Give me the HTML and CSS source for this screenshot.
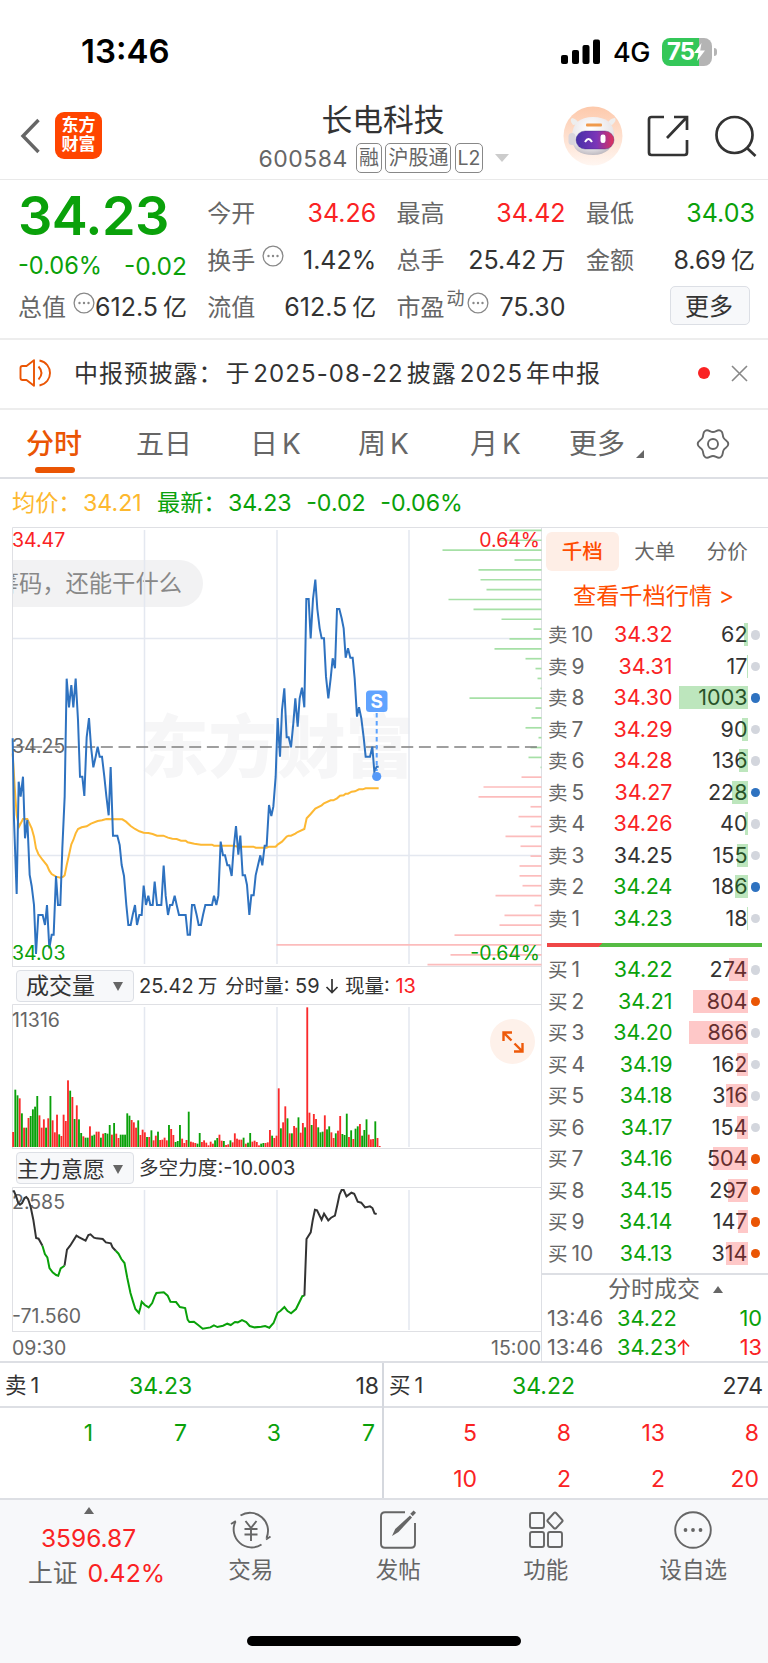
FILE: index.html
```html
<!DOCTYPE html>
<html lang="zh-CN">
<head>
  <meta charset="UTF-8">
  <meta name="viewport" content="width=device-width, initial-scale=1.0">
  <title>长电科技 600584</title>
  <link rel="stylesheet" href="styles.css">
</head>
<body>
  <div class="status-bar">
    <span class="clock">13:46</span>
    <div class="status-right">
      <svg class="signal" width="40" height="26" viewBox="0 0 40 26">
        <rect x="0" y="16" width="7" height="9" rx="2"/>
        <rect x="11" y="11" width="7" height="14" rx="2"/>
        <rect x="21.500" y="6" width="7" height="19" rx="2"/>
        <rect x="32" y="0.500" width="7" height="24.500" rx="2"/>
      </svg>
      <span class="network">4G</span>
      <div class="battery">
        <span>75</span>
        <svg width="11" height="18" viewBox="0 0 11 18"><path d="M7.500 0 0 10h4.500L3 18l8-10.500H6.200z" fill="#fff"/></svg>
      </div>
    </div>
  </div>

  <header class="header">
    <div class="header-left">
      <svg width="22" height="36" viewBox="0 0 22 36"><path d="M18.500 2 3 18l15.500 16" fill="none" stroke="#666" stroke-width="3.400"/></svg>
      <div class="logo"><span>东方</span><span>财富</span></div>
    </div>
    <div class="title">
      <h1>长电科技</h1>
      <div class="code">
        <span class="code-num">600584</span>
        <span class="tag">融</span><span class="tag">沪股通</span><span class="tag l2">L2</span>
        <i class="tri-down light"></i>
      </div>
    </div>
    <div class="header-right">
      <svg width="60" height="60" viewBox="0 0 60 60">
        <defs>
          <linearGradient id="halo" x1="0" y1="0" x2="0" y2="1"><stop offset="0" stop-color="#fdc9ab"/><stop offset="1" stop-color="#fff6f1"/></linearGradient>
          <linearGradient id="visor" x1="0" y1="0" x2="1" y2="0"><stop offset="0" stop-color="#4630a8"/><stop offset=".55" stop-color="#7c35b8"/><stop offset="1" stop-color="#e0305a"/></linearGradient>
          <radialGradient id="helmet" cx=".45" cy=".3" r=".75"><stop offset="0" stop-color="#fff"/><stop offset=".7" stop-color="#e8e5e8"/><stop offset="1" stop-color="#b5b0b8"/></radialGradient>
        </defs>
        <circle cx="30" cy="30" r="29.500" fill="url(#halo)"/>
        <path d="M10 19q-4-5-1-7 5 1 7 6zM49 19q5-4 3-7-5 0-8 6z" fill="#eee"/>
        <path d="M9 31C9 17 17 11 30 11s21 6 21 18c0 13-8 20-21 20S9 44 9 31z" fill="url(#helmet)"/>
        <rect x="5.500" y="27" width="7" height="12" rx="3.500" fill="#d9d6dc"/>
        <rect x="23" y="17.500" width="16" height="3" rx="1" fill="#f09a4c"/>
        <rect x="13" y="25" width="38" height="18" rx="9" fill="url(#visor)" stroke="#3a2a80" stroke-opacity=".35"/>
        <path d="M22 36q3.500-6 7 0" fill="none" stroke="#fff" stroke-width="2"/>
        <rect x="37.500" y="28.500" width="5" height="8.500" rx="2.300" fill="#fff"/>
      </svg>
      <svg class="share" width="42" height="42" viewBox="0 0 42 42" fill="none" stroke="#333" stroke-width="2.700">
        <path d="M17 2H4.500Q2 2 2 4.500v33Q2 40 4.500 40h33q2.500 0 2.500-2.500V25"/>
        <path d="M27 2h13v13M40 2 20 23"/>
      </svg>
      <svg class="search" width="42" height="44" viewBox="0 0 42 44" fill="none" stroke="#333" stroke-width="2.700">
        <circle cx="19.500" cy="21" r="18"/><path d="m32 34 8.500 8"/>
      </svg>
    </div>
  </header>

  <section class="quote">
    <div class="quote-price">
      <div class="big">34.23</div>
      <div class="chg"><span>-0.06%</span><span>-0.02</span></div>
    </div>
    <div class="pair"><label>今开</label><b class="up">34.26</b></div>
    <div class="pair"><label>最高</label><b class="up">34.42</b></div>
    <div class="pair"><label>最低</label><b class="down">34.03</b></div>
    <div class="pair"><label>换手<svg class="dots"><use href="#more-dots"/></svg></label><b>1.42%</b></div>
    <div class="pair"><label>总手</label><b>25.42<em>万</em></b></div>
    <div class="pair"><label>金额</label><b>8.69<em>亿</em></b></div>
    <div class="pair"><label>总值<svg class="dots"><use href="#more-dots"/></svg></label><b>612.5<em>亿</em></b></div>
    <div class="pair"><label>流值</label><b>612.5<em>亿</em></b></div>
    <div class="pair"><label>市盈<sup>动</sup><svg class="dots tight"><use href="#more-dots"/></svg></label><b>75.30</b></div>
    <button class="more">更多</button>
  </section>

  <section class="notice">
    <svg width="34" height="30" viewBox="0 0 34 30" fill="none" stroke="#ea5504" stroke-width="1.900">
      <path d="M15 2.200v25.600L7.500 22H3.500Q1.500 22 1.500 20V10q0-2 2-2h4z" stroke-linejoin="round"/>
      <path d="M19.500 8.500q6 6.500 0 13M20.500 2.500c14 3 14 22 0 25"/>
    </svg>
    <p>中报预披露：<span class="yu">于</span><span class="num">2025-08-22</span>披露<span class="num">2025</span>年中报</p>
    <i class="red-dot"></i>
    <svg width="17" height="17" viewBox="0 0 17 17" stroke="#888" stroke-width="1.600"><path d="m1 1 15 15M16 1 1 16"/></svg>
  </section>

  <nav class="tabs">
    <a class="active">分时</a>
    <a>五日</a>
    <a>日<span>K</span></a>
    <a>周<span>K</span></a>
    <a>月<span>K</span></a>
    <a class="tab-more">更多</a>
    <svg width="34" height="34" viewBox="0 0 34 34" fill="none" stroke="#666" stroke-width="1.900">
      <path d="M17 5C20 5 21.700 2 24.700 3.800C27.700 5.600 26.100 8.300 27.600 10.900C29.100 13.500 32.300 13.500 32.300 17C32.300 20.500 29.100 20.500 27.600 23.100C26.100 25.700 27.700 28.400 24.700 30.200C21.700 32 20 29 17 29C14 29 12.300 32 9.300 30.200C6.300 28.400 7.900 25.700 6.400 23.100C4.900 20.500 1.700 20.500 1.700 17C1.700 13.500 4.900 13.500 6.400 10.900C7.900 8.300 6.300 5.600 9.300 3.800C12.300 2 14 5 17 5z"/>
      <circle cx="17" cy="17" r="5"/>
    </svg>
  </nav>

  <div class="legend">
    <span class="avg">均价：</span><span class="avg v1">34.21</span>
    <span class="last">最新：</span><span>34.23</span><span>-0.02</span><span>-0.06%</span>
  </div>

  <main class="main">
    <div class="charts">
      <div class="chart price-chart">
        <div class="pill">筹码，还能干什么</div>
        <div class="watermark">东方财富</div>
        <svg width="542" height="440" viewBox="0 0 542 440">
          <g class="grid">
            <path d="M144.500 3v434M277 3v434M409 3v434" />
            <path d="M12 111.500h530M12 328.500h530"/>
          </g>
          <path class="frame" d="M12.500 440V.500H542M12 439.500h530"/>
          <g id="profile"></g>
          <path d="M12.500 220H538" stroke="#808080" stroke-width="1.600" stroke-dasharray="12 5.670"/>
          <g transform="translate(0 -7) scale(.33333)" fill="none" stroke-linejoin="miter">
            <polyline class="avg-line" points="38,700 44,800 50,885 57,920 69,897 82,897 95,925 102,950 108,985 115,1002 128,1020 141,1036 148,1052 155,1062 168,1070 181,1073 190,1070 194,1066 200,1036 207,1005 214,973 220,960 227,940 234,927 245,922 260,919 273,911 293,903 306,901 319,897 367,898 378,905 392,918 405,927 418,934 431,938 445,939 458,942 471,947 490,947 504,953 517,956 530,957 543,962 557,962 563,967 583,971 603,974 636,974 642,977 700,977 715,980 760,980 767,983 800,983 807,980 827,980 834,973 846,965 860,950 866,947 873,947 886,941 893,936 913,927 920,895 932,882 946,866 965,856 972,850 992,841 1000,841 1011,835 1020,827 1031,826 1037,821 1044,821 1055,815 1065,814 1077,808 1088,808 1097,805 1136,805"/>
            <polyline class="price-line" points="38,655 42,900 50,1122 56,785 62,830 69,770 75,955 82,900 89,1065 95,1098 102,1155 108,1302 115,1185 128,1185 135,1215 141,1155 148,1285 155,1244 161,1244 168,1068 174,1155 181,1155 187,985 194,830 200,476 207,562 214,495 220,562 227,476 234,600 240,770 247,770 253,828 260,652 267,594 273,680 280,742 287,710 293,680 299,710 306,710 313,770 319,828 326,886 332,741 339,947 352,947 359,975 365,1035 372,1068 379,1155 385,1215 392,1215 398,1185 405,1155 411,1215 418,1185 425,1185 431,1097 438,1155 445,1127 451,1155 458,1155 464,1085 471,1155 484,1155 491,1037 497,1127 504,1185 510,1155 517,1155 524,1127 530,1155 537,1185 557,1185 563,1244 570,1244 576,1155 583,1155 590,1185 596,1215 603,1215 609,1185 616,1155 636,1155 642,1127 649,1155 655,1127 662,965 669,1006 675,1006 682,1036 688,1036 695,1068 701,985 708,918 715,1004 721,947 728,1066 735,1066 741,1095 748,1185 754,1126 761,1126 767,1066 774,1036 781,1006 787,1036 794,977 800,977 807,855 814,888 820,860 827,770 833,594 840,710 846,570 853,505 860,652 866,652 873,682 880,610 886,535 893,620 899,535 906,503 913,562 919,237 926,237 932,355 939,237 946,179 952,267 959,325 965,355 972,355 978,470 985,535 992,475 998,415 1005,445 1011,267 1018,267 1025,295 1031,325 1037,413 1044,385 1051,413 1058,413 1064,475 1071,590 1077,562 1084,595 1091,652 1097,710 1110,710 1117,680 1123,755 1130,740 1136,740"/>
          </g>
          <path d="M376.700 186v58" stroke="#5aa2ff" stroke-width="2" stroke-dasharray="4.500 3.500"/>
          <circle cx="376.700" cy="249.500" r="4.600" fill="#5599f8"/>
          <rect x="366" y="163.500" width="21.500" height="21.500" rx="3.500" fill="#60a3ff"/>
          <text x="376.700" y="181" class="sell-mark">S</text>
          <text x="12" y="20" class="axis up">34.47</text>
          <text x="12" y="226" class="axis">34.25</text>
          <text x="12" y="432.500" class="axis down">34.03</text>
          <text x="540" y="20" class="axis up end">0.64%</text>
          <text x="540" y="432.500" class="axis down end">-0.64%</text>
        </svg>
      </div>

      <div class="toolbar">
        <div class="select">成交量<i class="tri-down"></i></div>
        <p>25.42<em class="unit">万</em> <em>分时量</em>: 59 <svg width="14" height="16" viewBox="0 0 13 16" fill="none" stroke="#333" stroke-width="1.700"><path d="M6.500 1v13.500M1 9l5.500 5.500L12 9"/></svg> <em>现量</em>: <span class="up">13</span></p>
      </div>
      <div class="chart volume-chart">
        <svg width="542" height="145" viewBox="0 0 542 145">
          <path class="grid" d="M144.500 3v140M277 3v140M409 3v140"/>
          <path class="frame" d="M12.500 145V.500H542M12 144.500h530"/>
          <g id="volume"></g>
          <text x="12" y="22.500" class="axis">11316</text>
        </svg>
        <div class="expand">
          <svg width="24" height="24" viewBox="0 0 24 24" fill="none" stroke="#ee5a0a" stroke-width="2.400"><path d="M2.500 11V2.500H11M2.500 2.500l8 8M21.500 13v8.500H13M21.500 21.500l-8-8"/></svg>
        </div>
      </div>

      <div class="toolbar second">
        <div class="select wide">主力意愿<i class="tri-down"></i></div>
        <p><em>多空力度</em>:-10.003</p>
      </div>
      <div class="chart force-chart">
        <svg width="542" height="145" viewBox="0 0 542 145">
          <path class="grid" d="M144.500 3v140M277 3v140M409 3v140"/>
          <path class="frame" d="M12.500 145V.500H542M12 144.500h530"/>
          <text x="12" y="22" class="axis">2.585</text>
          <text x="12" y="136" class="axis">-71.560</text>
          <g class="force" transform="translate(0 -37.300) scale(.35070 .33333)">
            <polyline points="36,125 40,125 46,140 52,160 57,165 63,160 70,145 75,142 80,148 87,170 95,210 103,265 110,267 121,288"/>
            <polyline class="g" points="121,288 128,313 135,323 141,355 150,368 160,376 166,378 173,356 184,348"/>
            <polyline points="184,348 191,300 200,288 218,258 226,263 244,273 252,256 258,254 268,264 275,266 293,268 302,278 316,281 321,293 330,303"/>
            <polyline class="g" points="330,303 338,312 346,328 355,340 363,385 372,430 380,458 386,478 396,490 400,475 404,456 413,466 424,473 434,460 441,440 446,430 467,428 478,438 486,456 502,457 513,472 528,475 535,510 540,517 553,516 565,526 578,537 600,533 610,527 620,532 636,528 648,522 658,526 670,517 678,518 690,511 702,517 712,529 726,533 745,531 756,529 768,534 780,520 791,490 800,483 811,472 820,484 830,491 844,478 857,450 862,439 868,438"/>
            <polyline points="868,438 874,268 886,248 892,210 898,180 904,182 917,210 924,192 936,212 944,204 955,198 962,165 968,135 974,121 980,121 988,140 1002,129 1010,132 1020,156 1030,159 1041,173 1055,170 1062,175 1068,191 1074,193"/>
          </g>
        </svg>
      </div>
      <div class="time-axis"><span>09:30</span><span>15:00</span></div>
    </div>

    <aside class="book">
      <div class="book-tabs"><span class="on">千档</span><span>大单</span><span>分价</span></div>
      <div class="book-link">查看千档行情 &gt;</div>
      <div id="sells"></div>
      <div class="ratio"></div>
      <div id="buys"></div>
      <div class="deals-head">分时成交<i class="tri-up"></i></div>
      <div class="deal"><span>13:46</span><b class="down">34.22</b><b class="down qty">10</b></div>
      <div class="deal"><span>13:46</span><b class="down">34.23</b><svg width="13" height="17" viewBox="0 0 13 17" fill="none" stroke="#fa2223" stroke-width="1.700"><path d="M6.500 16V1.500M1 7.500l5.500-6 5.500 6"/></svg><b class="up qty">13</b></div>
    </aside>
  </main>

  <section class="level1">
    <div class="side">
      <div class="side-head"><span>卖<i>1</i></span><b class="down">34.23</b><span class="qty">18</span></div>
      <div class="cells down"><span>1</span><span>7</span><span>3</span><span>7</span></div>
    </div>
    <div class="side">
      <div class="side-head"><span>买<i>1</i></span><b class="down">34.22</b><span class="qty">274</span></div>
      <div class="cells up"><span>5</span><span>8</span><span>13</span><span>8</span><span>10</span><span>2</span><span>2</span><span>20</span></div>
    </div>
  </section>

  <footer class="footer">
    <div class="index">
      <i class="tri-up"></i>
      <b class="up">3596.87</b>
      <p>上证 <span class="up">0.42%</span></p>
    </div>
    <a>
      <svg width="44" height="40" viewBox="0 0 44 40" fill="none" stroke="#666" stroke-width="1.900">
        <path d="M11.500 5.500A18 18 0 0 1 37.500 28M41.500 26.500 37 29.500M32.500 34.500A18 18 0 0 1 6.500 11.500M2 14l4.800-3"/>
        <path d="m16.500 11 5.500 7 5.500-7M22 18v13M15.500 19h13M15.500 24.500h13"/>
      </svg>
      交易
    </a>
    <a>
      <svg width="38" height="40" viewBox="0 0 38 40" fill="none" stroke="#666" stroke-width="1.900">
        <path d="M26 2.200H6Q2 2.200 2 6.200v27.600q0 4 4 4h26q4 0 4-4V13"/>
        <path d="m13 26 3.200-7L31 5.500l2 2L19.500 22z" fill="#666" stroke="none"/><path d="m32.500 5 3.300-3.400" stroke-width="3.400"/>
      </svg>
      发帖
    </a>
    <a>
      <svg width="36" height="40" viewBox="0 0 36 40" fill="none" stroke="#666" stroke-width="1.900">
        <rect x="2" y="3" width="14" height="15" rx="2"/><rect x="2" y="22" width="14" height="15" rx="2"/><rect x="20" y="22" width="14" height="15" rx="2"/>
        <path d="m28 3 6.300 7q.8.800 0 1.500L28 18.200q-1 .8-2 0l-6.300-6.700q-.8-.7 0-1.500L26 3q1-.8 2 0z"/>
      </svg>
      功能
    </a>
    <a>
      <svg width="38" height="40" viewBox="0 0 38 40" fill="none" stroke="#666" stroke-width="1.900">
        <circle cx="19" cy="20" r="17.800"/>
        <g fill="#666" stroke="none"><circle cx="11.500" cy="20" r="1.900"/><circle cx="19" cy="20" r="1.900"/><circle cx="26.500" cy="20" r="1.900"/></g>
      </svg>
      设自选
    </a>
    <div class="home-bar"></div>
  </footer>

  <svg class="defs">
    <symbol id="more-dots" viewBox="0 0 22 22">
      <circle cx="11" cy="11" r="9.900" fill="none" stroke="#888" stroke-width="1.300"/>
      <g fill="#888"><circle cx="6.500" cy="11" r="1.200"/><circle cx="11" cy="11" r="1.200"/><circle cx="15.500" cy="11" r="1.200"/></g>
    </symbol>
  </svg>
  <script src="script.js"></script>
</body>
</html>
```
FILE: styles.css
```css
* {
  box-sizing: border-box;
}

body {
  margin: 0;
  width: 768px;
  background: #fff;
  color: #333;
  font-family: Inter, "Noto Sans CJK SC", sans-serif;
  font-size: 24px;
  line-height: 1;
}

i, em, b {
  font-style: normal;
  font-weight: normal;
}

p, h1 {
  margin: 0;
  font-weight: normal;
}

.up { color: #fa2223; }
.down { color: #0aa10a; }

.defs {
  display: none;
}

.tri-down, .tri-up {
  display: inline-block;
  border: 5.500px solid transparent;
}

.tri-down {
  border-top: 9px solid #666;
  border-bottom: 0;
}

.tri-down.light {
  border-width: 8px 7px 0;
  border-top-color: #ccc;
}

.tri-up {
  border-bottom: 7px solid #666;
  border-top: 0;
}

/* status bar */
.status-bar {
  height: 96px;
  padding: 7px 52px 0 81px;
  display: flex;
  justify-content: space-between;
  align-items: center;
  color: #000;
}

.clock {
  font-size: 33px;
  font-weight: 600;
  letter-spacing: 0;
}

.status-right {
  display: flex;
  align-items: center;
}

.network {
  margin-left: 12px;
  width: 49px;
  font-size: 27px;
  font-weight: 500;
  letter-spacing: -0.500px;
  padding-top: 2px;
}

.battery {
  position: relative;
  width: 50px;
  height: 28px;
  border-radius: 8px;
  background: linear-gradient(90deg, #34c759 37px, #b4b4b4 37px);
  color: #fff;
  font-size: 24px;
  font-weight: 700;
  letter-spacing: -1px;
  display: flex;
  align-items: center;
  padding-left: 5px;
  margin-right: 4px;
}

.battery:after {
  content: '';
  position: absolute;
  right: -5px;
  top: 10px;
  width: 3px;
  height: 8px;
  border-radius: 0 4px 4px 0;
  background: #b4b4b4;
}

/* header */
.header {
  height: 84px;
  border-bottom: 1px solid #e9e9e9;
  display: grid;
  grid-template-columns: 1fr 260px 1fr;
}

.header-left {
  display: flex;
  align-items: center;
  padding: 0 0 3px 20px;
}

.logo {
  margin: -2px 0 0 13px;
  width: 47px;
  height: 47px;
  border-radius: 9px;
  background: #ff4500;
  color: #fff;
  font-size: 17px;
  font-weight: 700;
  line-height: 19px;
  display: flex;
  flex-direction: column;
  align-items: center;
  justify-content: center;
}

.title {
  text-align: center;
}

.title h1 {
  font-size: 30.800px;
  line-height: 44px;
  padding-top: 2px;
  margin-left: -2px;
}

.code {
  display: flex;
  justify-content: center;
  align-items: center;
  height: 34px;
  margin-top: -1px;
  color: #666;
}

.code-num {
  font-size: 23px;
  letter-spacing: 0.500px;
  margin-right: 8px;
  padding-top: 2px;
}

.tag {
  height: 30px;
  border: 1.500px solid #888;
  border-radius: 5px;
  padding: 0 2px;
  margin-right: 3.500px;
  font-size: 20px;
  line-height: 28px;
}

.tag.l2 {
  width: 28px;
  padding: 0;
  font-size: 19.500px;
}

.tri-down.light {
  margin-left: 9px;
}

.header-right {
  display: flex;
  align-items: center;
  justify-content: flex-end;
  padding: 0 11px 4px 0;
}

.share {
  margin-left: 24px;
}

.search {
  margin-left: 26px;
}

/* quote summary */
.quote {
  height: 160px;
  padding: 10px 13px 9px 18px;
  border-bottom: 2px solid #ededed;
  display: grid;
  grid-template-columns: repeat(4, 169px);
  grid-template-rows: repeat(3, 47px);
  column-gap: 20.300px;
}

.quote-price {
  grid-row: span 2;
  color: #0aa10a;
}

.big {
  font-size: 54px;
  font-weight: 600;
  letter-spacing: -0.600px;
  line-height: 52px;
}

.chg {
  display: flex;
  justify-content: space-between;
  margin-top: 12px;
  font-size: 23.600px;
}

.chg span:last-child {
  font-size: 24.500px;
}

.pair {
  display: flex;
  justify-content: space-between;
  align-items: center;
  position: relative;
  white-space: nowrap;
}

.pair label {
  color: #666;
  display: flex;
  align-items: center;
}

.pair b {
  font-size: 25px;
}

.pair em {
  font-size: 24px;
  margin-left: 5px;
}

.pair sup {
  font-size: 18px;
  line-height: 18px;
  margin: -18px 0 0 2px;
}

.dots {
  width: 22px;
  height: 22px;
  margin: -10px -4px 0 7px;
}

.dots.tight {
  margin-left: 2px;
}

.more {
  justify-self: end;
  align-self: center;
  margin: -4px 5px 0 0;
  width: 80px;
  height: 39px;
  border: 1.500px solid #dcdfe5;
  border-radius: 5px;
  background: #f7f8fa;
  color: #333;
  font: 24px/34px "Noto Sans CJK SC", sans-serif;
  padding: 0 2px 2px 0;
}

/* announcement */
.notice {
  height: 70px;
  border-bottom: 2px solid #ededed;
  padding: 0 20px 2px 19px;
  display: flex;
  align-items: center;
}

.notice p {
  flex: 1;
  margin-left: 21px;
  padding-top: 2px;
  letter-spacing: 0.900px;
}

.notice .yu {
  margin-left: 2px;
}

.notice .num {
  margin: 0 3px;
  letter-spacing: 1.100px;
}

.red-dot {
  width: 12px;
  height: 12px;
  border-radius: 50%;
  background: #fa2223;
  margin-right: 21px;
}

/* period tabs */
.tabs {
  height: 69px;
  border-bottom: 2px solid #dddfe4;
  display: flex;
  align-items: center;
  padding: 2px 0 2px 26px;
  color: #666;
  font-size: 28px;
}

.tabs a {
  position: relative;
  width: 110px;
  padding-top: 1px;
}

.tabs a:nth-child(2) { width: 114px; }
.tabs a:nth-child(3) { width: 108px; }
.tabs a:nth-child(4) { width: 112px; }
.tabs a:nth-child(5) { width: 99px; }

.tabs a span {
  margin-left: 4px;
}

.tabs .active {
  color: #ea5504;
  font-weight: 500;
}

.tabs .active:after {
  content: '';
  position: absolute;
  left: 9px;
  top: 38px;
  width: 40px;
  height: 6px;
  border-radius: 3px;
  background: #ea5504;
}

.tabs .tab-more {
  width: 127px;
}

.tab-more:after {
  content: '';
  position: absolute;
  left: 67px;
  top: 21px;
  border-left: 8px solid transparent;
  border-bottom: 8px solid #666;
}

.legend {
  height: 48px;
  display: flex;
  align-items: center;
  padding: 2px 0 0 12px;
  color: #0aa10a;
  font-size: 23.200px;
}

.legend span {
  margin-right: 14.500px;
}

.legend .avg,
.legend .last {
  margin-right: 0;
  color: #fdb82e;
  width: 71px;
}

.legend .v1 {
  width: 74px;
}

.legend .last {
  color: #0aa10a;
}

/* charts */
.main {
  display: flex;
  height: 836px;
  border-bottom: 2px solid #dddfe4;
}

.charts {
  width: 542px;
  border-right: 1px solid #dddfe4;
}

.chart {
  position: relative;
}

.chart svg {
  display: block;
  position: relative;
}

.price-chart { height: 440px; }
.volume-chart { height: 145px; }
.force-chart { height: 145px; }

.grid {
  fill: none;
  stroke: #e4e8f0;
  stroke-width: 1.500px;
}

.frame {
  fill: none;
  stroke: #dfe0e4;
  stroke-width: 1px;
}

.avg-line {
  stroke: #fdb833;
  stroke-width: 6px;
}

.price-line {
  stroke: #2e72c0;
  stroke-width: 6px;
}

.force polyline {
  fill: none;
  stroke: #333;
  stroke-width: 2px;
  vector-effect: non-scaling-stroke;
}

.force .g {
  stroke: #0aa10a;
}

.axis {
  font-size: 19.500px;
  fill: #666;
}

.axis.up { fill: #fa2223; }
.axis.down { fill: #0aa10a; }
.axis.end { text-anchor: end; }

.sell-mark {
  fill: #fff;
  font-size: 19px;
  font-weight: 700;
  text-anchor: middle;
}

.pill {
  position: absolute;
  left: 12px;
  top: 33px;
  width: 191px;
  height: 47px;
  border-radius: 0 24px 24px 0;
  background: #f2f2f3;
  color: #888;
  font-size: 23.300px;
  line-height: 48px;
  padding-right: 21px;
  overflow: hidden;
  white-space: nowrap;
  display: flex;
  justify-content: flex-end;
}

.watermark {
  position: absolute;
  left: 140px;
  top: 185px;
  color: #f6f6f7;
  font-size: 68.500px;
  line-height: 72px;
  font-weight: 900;
}

.toolbar {
  height: 37px;
  display: flex;
  align-items: center;
  padding-left: 16px;
}

.toolbar.second {
  height: 38px;
}

.toolbar p {
  font-size: 20px;
  margin-left: 5px;
  padding-top: 1px;
  white-space: nowrap;
}

.toolbar em {
  font-size: 19.600px;
}

.toolbar .unit {
  margin: 0 2px 0 4px;
}

.toolbar p svg {
  vertical-align: -1px;
}

.select {
  width: 118px;
  height: 32px;
  border: 1.500px solid #dcdfe5;
  border-radius: 4px;
  background: #f7f8fa;
  font-size: 23px;
  padding: 2px 10px 0 9px;
  display: flex;
  justify-content: space-between;
  align-items: center;
}

.select.wide {
  font-size: 22px;
  padding-left: 0;
}

.expand {
  position: absolute;
  left: 490px;
  top: 15px;
  width: 45px;
  height: 45px;
  border-radius: 50%;
  background: #fef1ea;
  display: flex;
  align-items: center;
  justify-content: center;
}

.time-axis {
  display: flex;
  justify-content: space-between;
  padding: 7px 0 0 12px;
  color: #666;
  font-size: 19.500px;
}

/* order book */
.book {
  flex: 1;
  border-top: 1px solid #dfe0e4;
}

.book-tabs {
  display: flex;
  padding: 4px 4px 0;
  color: #666;
  font-size: 20.500px;
}

.book-tabs span {
  width: 72.500px;
  height: 39px;
  line-height: 39px;
  text-align: center;
  border-radius: 6px;
}

.book-tabs .on {
  background: #feeee6;
  color: #ff4d00;
  font-weight: 500;
}

.book-link {
  height: 48px;
  line-height: 51px;
  padding-left: 31px;
  color: #ff4d00;
  font-size: 23.200px;
}

.row {
  height: 31.500px;
  display: flex;
  align-items: center;
  position: relative;
  padding: 0 8px 0 6px;
  font-size: 21.500px;
}

.row span {
  width: 53px;
  color: #666;
  font-size: 21px;
}

.row span em {
  font-size: 19.500px;
  margin-right: 4px;
}

.row b {
  width: 71.500px;
  text-align: right;
}

.row .qty {
  width: 75px;
}

.row .bar {
  position: absolute;
  right: 20px;
  top: 4px;
  height: 23px;
  background: rgba(10, 161, 10, 0.27);
}

.row .bar.buy {
  background: rgba(250, 34, 35, 0.25);
}

.row .dot {
  width: 9.500px;
  height: 9.500px;
  border-radius: 50%;
  background: #d3d6dd;
  margin-left: auto;
}

.dot.s { background: #2e72c0 !important; }
.dot.b { background: #ea5504 !important; }

.ratio {
  height: 4px;
  margin: 9px 6px 7px 5px;
  background: linear-gradient(135deg, #ef4747 39px, #56bb44 39px);
}

.deals-head {
  height: 31px;
  margin-top: 4px;
  border-top: 2px solid #dddfe4;
  line-height: 29px;
  color: #666;
  font-size: 23px;
  padding-left: 66px;
}

.deals-head i {
  margin: 0 0 4px 13px;
}

.deal {
  height: 29px;
  display: flex;
  align-items: center;
  padding: 0 6px 0 5px;
  font-size: 21.800px;
}

.deal span {
  width: 70px;
  color: #666;
}

.deal .qty {
  margin-left: auto;
}

/* level 1 queue */
.level1 {
  display: flex;
  height: 137px;
  border-bottom: 2px solid #dddfe4;
  font-size: 23px;
}

.side {
  width: 382px;
}

.side + .side {
  border-left: 2px solid #d5d8de;
  width: 386px;
}

.side-head {
  height: 45px;
  border-bottom: 2px solid #dddfe4;
  display: flex;
  align-items: center;
  padding: 3px 5px 0;
}

.side-head span {
  width: 124px;
}

.side + .side .side-head span {
  width: 123px;
}

.side-head i {
  margin-left: 4px;
}

.side-head span:first-child {
  font-size: 21.500px;
}

.side-head .qty {
  margin-left: auto;
  text-align: right;
}

.side:first-child .qty {
  margin-right: -2px;
}

.cells {
  display: grid;
  grid-template-columns: 93px repeat(3, 94px);
  grid-auto-rows: 46px;
  align-items: center;
  text-align: right;
  padding-top: 2px;
}

/* bottom navigation */
.footer {
  position: relative;
  height: 163px;
  background: #f7f8fa;
  display: flex;
  color: #666;
  font-size: 22.500px;
}

.footer a {
  width: 147.500px;
  padding-top: 10px;
  display: flex;
  flex-direction: column;
  align-items: center;
  gap: 9px;
}

.index {
  width: 177px;
  display: flex;
  flex-direction: column;
  align-items: center;
  padding-top: 7px;
}

.index b {
  margin-top: 12px;
  font-size: 24.500px;
}

.index p {
  margin: 10px 0 0 16px;
  font-size: 24.800px;
  word-spacing: 3px;
}

.home-bar {
  position: absolute;
  left: 247px;
  bottom: 17px;
  width: 274px;
  height: 10px;
  border-radius: 5px;
  background: #000;
}
```
FILE: script.js
```js
// order book: [label, price, volume, marked]
const sells = [
  [10, '34.32', 62], [9, '34.31', 17], [8, '34.30', 1003, 1], [7, '34.29', 90], [6, '34.28', 136],
  [5, '34.27', 228, 1], [4, '34.26', 40], [3, '34.25', 155], [2, '34.24', 186, 1], [1, '34.23', 18]
];
const buys = [
  [1, '34.22', 274], [2, '34.21', 804, 1], [3, '34.20', 866], [4, '34.19', 162], [5, '34.18', 316],
  [6, '34.17', 154], [7, '34.16', 504, 1], [8, '34.15', 297, 1], [9, '34.14', 147, 1], [10, '34.13', 314, 1]
];

function priceClass(p) {
  if (p > 34.25) return 'up';
  return p < 34.25 ? 'down' : '';
}

function renderRows(id, rows, name, type) {
  document.getElementById(id).innerHTML = rows.map(([n, price, vol, mark]) => `
    <div class="row">
      <span><em>${name}</em>${n}</span>
      <b class="${priceClass(price)}">${price}</b>
      <b class="qty">${vol}</b>
      <i class="bar ${type}" style="width: ${vol * 0.0686}px"></i>
      <i class="dot ${mark ? type[0] : ''}"></i>
    </div>`).join('');
}

renderRows('sells', sells, '卖', 'sell');
renderRows('buys', buys, '买', 'buy');

// volume by price, top to bottom
const greenLines = [32, 43, 99, 27, 63, 61, 55, 93, 68, 40, 8, 32, 47, 16, 6, 4, 1, 72, 6, 10, 16, 3, 11, 13, 1];
const redLines = [20, 58, 63, 11, 23, 11, 36, 21, 11, 22, 22, 19, 46, 7, 37, 42, 87, 265, 91, 114];
document.getElementById('profile').innerHTML = greenLines.concat(redLines).map((w, i) => {
  const y = 3.4 + i * 9.87;
  const color = i < greenLines.length ? '#a6e0a6' : '#fcbcbc';
  return `<path d="M${541.5 - w} ${y}H541.5" stroke="${color}" stroke-width="1.7"/>`;
}).join('');

// minute volume, r = rise, g = fall
const volume = `r45 g172 g155 r146 g101 r58 g58 r87 g93 g113 g121 g153 r95 r58 r83 g58 r86 g153 r80 r44
r97 g38 r33 r97 r78 r200 g169 r150 g84 r125 g83 g42 r32 g28 g28 r62 g34 g37 r46 r46
g28 r40 g42 g40 g66 r37 g72 r40 r27 g37 g37 g37 g101 g94 r81 r74 r58 g80 r36 r52
r44 g30 r30 g50 r20 r34 g46 r21 r22 r28 r20 g66 r54 r36 g15 g18 g66 r25 r12 r21
g106 r16 r14 r12 g10 g42 r15 r20 r13 r5 r16 r10 g20 g27 r37 r19 g18 r6 r8 g20
r14 r41 r25 r22 r22 g28 r10 g13 g42 r16 r19 r15 r5 g10 g12 r12 r14 r51 g34 r27
r34 r176 g56 r74 r122 g86 r41 g41 r63 r58 g89 r43 r72 g59 r419 r103 g66 r99 r84 g59
g44 g46 r95 g53 g62 r44 r27 g41 r49 r93 g39 g36 g100 r30 g50 r24 g55 g62 r69 g34
g51 g83 r37 r23 r24 g77 r27 r3`.split(/\s+/);
document.getElementById('volume').innerHTML = volume.map((v, i) => {
  const h = v.slice(1) / 3;
  const color = v[0] === 'r' ? '#fa2a2b' : '#0aa10a';
  return `<rect x="${12.2 + i * 2.195}" y="${143 - h}" width="1.85" height="${h}" fill="${color}"/>`;
}).join('');
```
